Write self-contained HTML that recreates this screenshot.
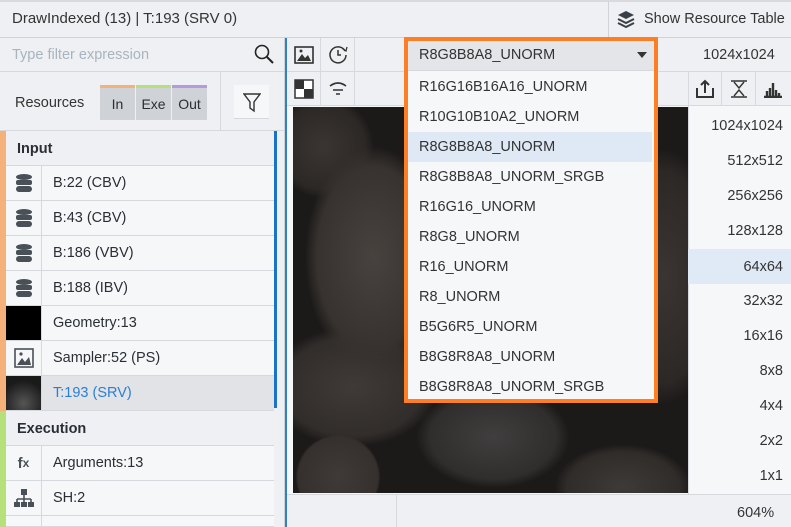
<!DOCTYPE html>
<html style="overflow:hidden;width:791px;height:527px"><head><style>
*{box-sizing:border-box;margin:0;padding:0}
body{width:791px;height:527px;overflow:hidden;background:#eef0f3;font-family:"Liberation Sans",sans-serif;font-size:14px;color:#2a2f36;position:relative}
.a{position:absolute}
.row{position:absolute;left:6px;width:268px;height:35px;border-bottom:1px solid #d5d8dc;background:#f6f7f9}
.row .ic{position:absolute;left:0;top:0;width:36px;height:34px;border-right:1px solid #d5d8dc;display:flex;align-items:center;justify-content:center}
.row .t{position:absolute;left:47px;top:9px;font-size:14.5px}
.hdr{position:absolute;left:6px;width:268px;height:35px;border-bottom:1px solid #d5d8dc;background:#eef0f3;font-weight:bold;padding:10px 0 0 11px;font-size:14.5px}
.mip{position:absolute;left:688px;width:103px;height:35px;text-align:right;padding:10px 8px 0 0;color:#333;font-size:14.5px}
.dd{position:absolute;left:408px;width:244px;height:30px;padding:7px 0 0 11px;color:#333;font-size:14.5px}
.tb{position:absolute;width:34px;height:34px;border-right:1px solid #d5d8dc;border-bottom:1px solid #d5d8dc;display:flex;align-items:center;justify-content:center}
</style></head><body>
<div class="a" style="left:0;top:0;width:791px;height:38px;border-bottom:1px solid #cfd2d6;border-top:2px solid #d8dadd"></div>
<div class="a" style="left:12px;top:10px;font-size:15px;color:#333">DrawIndexed (13) | T:193 (SRV 0)</div>
<div class="a" style="left:608px;top:2px;width:183px;height:36px;border-left:1px solid #cfd2d6"></div>
<svg class="a" style="left:616px;top:10px" width="20" height="18" viewBox="0 0 20 18"><path d="M10 1 L18 5 L10 9 L2 5Z" fill="#3a4048"/><path d="M2 9 L10 13 L18 9" stroke="#3a4048" stroke-width="2" fill="none"/><path d="M2 13 L10 17 L18 13" stroke="#3a4048" stroke-width="2" fill="none"/></svg>
<div class="a" style="left:644px;top:11px;color:#333;font-size:14.5px">Show Resource Table</div>

<div class="a" style="left:0;top:38px;width:285px;height:489px;background:#eef0f3;border-right:1px solid #cfd2d6;overflow:hidden">
</div>
<div class="a" style="left:0;top:38px;width:284px;height:34px;border-bottom:1px solid #d5d8dc"></div>
<div class="a" style="left:12px;top:47px;color:#a9b4c0;font-size:14.5px">Type filter expression</div>
<svg class="a" style="left:254px;top:44px" width="20" height="20"><circle cx="8" cy="8" r="6.5" stroke="#222" stroke-width="1.6" fill="none"/><path d="M13 13 L19 19" stroke="#222" stroke-width="2"/></svg>
<div class="a" style="left:0;top:72px;width:284px;height:59px;border-bottom:1px solid #d5d8dc"></div>
<div class="a" style="left:15px;top:95px;color:#333;font-size:14.5px">Resources</div>
<div class="a" style="left:100px;top:85px;width:35px;height:35px;background:#cfd2d6;border-top:3px solid #f4b27a;text-align:center;padding-top:8px">In</div>
<div class="a" style="left:136px;top:85px;width:35px;height:35px;background:#cfd2d6;border-top:3px solid #b5e07a;text-align:center;padding-top:8px">Exe</div>
<div class="a" style="left:172px;top:85px;width:35px;height:35px;background:#cfd2d6;border-top:3px solid #b49be0;text-align:center;padding-top:8px">Out</div>
<div class="a" style="left:220px;top:72px;width:1px;height:59px;background:#d5d8dc"></div>
<div class="a" style="left:234px;top:85px;width:35px;height:34px;background:#f6f7f9;border-bottom:1px solid #d5d8dc"></div>
<svg class="a" style="left:243px;top:93px" width="18" height="20"><path d="M1 1 H17 L11 9 V18 L7 15 V9Z" stroke="#333" stroke-width="1.4" fill="none"/></svg>

<div class="a" style="left:0;top:131px;width:6px;height:280px;background:#f4b27a"></div>
<div class="a" style="left:0;top:411px;width:6px;height:116px;background:#b5e07a"></div>
<div class="hdr" style="top:131px">Input</div>
<div class="row" style="top:166px"><div class="ic"><svg width="18" height="20"><ellipse cx="9" cy="4" rx="8" ry="3" fill="#4a5058"/><rect x="1" y="7" width="16" height="5" rx="2" fill="#4a5058"/><rect x="1" y="13" width="16" height="6" rx="3" fill="#4a5058"/></svg></div><div class="t">B:22 (CBV)</div></div>
<div class="row" style="top:201px"><div class="ic"><svg width="18" height="20"><ellipse cx="9" cy="4" rx="8" ry="3" fill="#4a5058"/><rect x="1" y="7" width="16" height="5" rx="2" fill="#4a5058"/><rect x="1" y="13" width="16" height="6" rx="3" fill="#4a5058"/></svg></div><div class="t">B:43 (CBV)</div></div>
<div class="row" style="top:236px"><div class="ic"><svg width="18" height="20"><ellipse cx="9" cy="4" rx="8" ry="3" fill="#4a5058"/><rect x="1" y="7" width="16" height="5" rx="2" fill="#4a5058"/><rect x="1" y="13" width="16" height="6" rx="3" fill="#4a5058"/></svg></div><div class="t">B:186 (VBV)</div></div>
<div class="row" style="top:271px"><div class="ic"><svg width="18" height="20"><ellipse cx="9" cy="4" rx="8" ry="3" fill="#4a5058"/><rect x="1" y="7" width="16" height="5" rx="2" fill="#4a5058"/><rect x="1" y="13" width="16" height="6" rx="3" fill="#4a5058"/></svg></div><div class="t">B:188 (IBV)</div></div>
<div class="row" style="top:306px"><div class="ic" style="background:#000"></div><div class="t">Geometry:13</div></div>
<div class="row" style="top:341px"><div class="ic"><svg width="20" height="20"><rect x="1" y="1" width="18" height="18" stroke="#4a5058" stroke-width="1.6" fill="none"/><path d="M3 17 L8 10 L11 14 L15 9 L17 17Z" fill="#4a5058"/><circle cx="7" cy="6" r="1.6" fill="#4a5058"/></svg></div><div class="t">Sampler:52 (PS)</div></div>
<div class="row" style="top:376px;background:#e1e3e7"><div class="ic" style="background:radial-gradient(circle at 50% 80%,#555 0,#333 40%,#1a1a1a 70%)"></div><div class="t" style="color:#2a7fd4">T:193 (SRV)</div></div>
<div class="hdr" style="top:411px">Execution</div>
<div class="row" style="top:446px"><div class="ic" style="font-weight:bold;color:#4a5058;font-size:15px">f<span style="font-size:12px">x</span></div><div class="t">Arguments:13</div></div>
<div class="row" style="top:481px"><div class="ic"><svg width="20" height="20"><rect x="7" y="1" width="6" height="6" fill="#4a5058"/><path d="M10 7 V11 M3 11 H17 M3 11 V14 M17 11 V14 M10 11 V14" stroke="#4a5058" stroke-width="1.6"/><rect x="0" y="14" width="6" height="5" fill="#4a5058"/><rect x="7" y="14" width="6" height="5" fill="#4a5058"/><rect x="14" y="14" width="6" height="5" fill="#4a5058"/></svg></div><div class="t">SH:2</div></div>
<div class="row" style="top:516px;height:11px"><div class="ic" style="height:11px"></div></div>
<div class="a" style="left:274px;top:131px;width:3px;height:277px;background:#1a73c8"></div>

<div class="a" style="left:285px;top:38px;width:2px;height:489px;background:#2f7fcb"></div>
<div class="a" style="left:287px;top:38px;width:504px;height:456px;background:#f6f7f9"></div>
<div class="a" style="left:287px;top:38px;width:504px;height:34px;background:#eef0f3;border-bottom:1px solid #d5d8dc"></div>
<div class="a" style="left:287px;top:72px;width:504px;height:34px;background:#eef0f3;border-bottom:1px solid #d5d8dc"></div>
<div class="tb" style="left:287px;top:38px"><svg width="20" height="18"><rect x="1" y="1" width="18" height="16" stroke="#333" stroke-width="1.6" fill="none"/><path d="M3 15 L8 8 L11 12 L14 9 L17 15Z" fill="#333"/><circle cx="7" cy="5" r="1.5" fill="#333"/></svg></div>
<div class="tb" style="left:321px;top:38px"><svg width="20" height="20"><path d="M17 6 A8 8 0 1 0 18 10" stroke="#333" stroke-width="1.5" fill="none"/><path d="M10 5 V10 H13" stroke="#333" stroke-width="1.5" fill="none"/><path d="M15 4 L18 6 L19 2" stroke="#333" stroke-width="1.3" fill="none"/></svg></div>
<div class="tb" style="left:287px;top:72px"><svg width="20" height="20"><rect x="1" y="1" width="18" height="18" stroke="#333" stroke-width="1.5" fill="#fff"/><rect x="1" y="1" width="9" height="9" fill="#333"/><rect x="10" y="10" width="9" height="9" fill="#333"/></svg></div>
<div class="tb" style="left:321px;top:72px"><svg width="20" height="16"><path d="M2 5 Q10 -1 18 5 M5 9 H15 M8 13 H12" stroke="#333" stroke-width="1.6" fill="none"/></svg></div>
<div class="a" style="left:703px;top:47px;color:#333;font-size:14.5px">1024x1024</div>
<div class="tb" style="left:688px;top:72px;border-left:1px solid #d5d8dc"><svg width="20" height="20"><path d="M2 9 V18 H18 V9 M10 14 V2 M6 6 L10 2 L14 6" stroke="#333" stroke-width="2" fill="none"/></svg></div>
<div class="tb" style="left:722px;top:72px"><svg width="20" height="20"><path d="M2 2 H18 M2 18 H18" stroke="#333" stroke-width="1.6"/><path d="M5 3 L10 9 L15 3 M5 17 L10 11 L15 17" stroke="#333" stroke-width="1.4" fill="none"/></svg></div>
<div class="tb" style="left:756px;top:72px;border-right:none"><svg width="20" height="18"><path d="M1 17 H19 M4 17 V11 M7 17 V8 M10 17 V3 M13 17 V10 M16 17 V13" stroke="#333" stroke-width="2.4"/></svg></div>
<div class="a" style="left:688px;top:106px;width:1px;height:388px;background:#d5d8dc"></div>
<div class="a" style="left:293px;top:107px;width:395px;height:386px;background:
radial-gradient(ellipse 50px 50px at 45px 370px,#3f3a37 0,#35302d 80%,transparent 85%),
radial-gradient(ellipse 90px 60px at 200px 330px,#403e3e 0,#302d2d 70%,transparent 85%),
radial-gradient(ellipse 80px 50px at 330px 380px,#3e3a38 0,#302c2a 70%,transparent 85%),
radial-gradient(ellipse 80px 130px at 80px 150px,#48423f 0,#37322f 70%,transparent 85%),
radial-gradient(ellipse 70px 150px at 370px 170px,#3a3532 0,#2c2826 70%,transparent 85%),
radial-gradient(ellipse 100px 70px at 60px 280px,#3f3a37 0,#312d2b 70%,transparent 85%),
radial-gradient(ellipse 60px 60px at 30px 40px,#3a3532 0,#2c2826 70%,transparent 85%),
#1c1a19"></div>
<div class="mip" style="top:108px">1024x1024</div>
<div class="mip" style="top:143px">512x512</div>
<div class="mip" style="top:178px">256x256</div>
<div class="mip" style="top:213px">128x128</div>
<div class="mip" style="top:249px;background:#e0eaf6">64x64</div>
<div class="mip" style="top:283px">32x32</div>
<div class="mip" style="top:318px">16x16</div>
<div class="mip" style="top:353px">8x8</div>
<div class="mip" style="top:388px">4x4</div>
<div class="mip" style="top:423px">2x2</div>
<div class="mip" style="top:458px">1x1</div>
<div class="a" style="left:287px;top:494px;width:504px;height:33px;background:#eef0f3;border-top:1px solid #d5d8dc"></div>
<div class="a" style="left:396px;top:494px;width:1px;height:33px;background:#d5d8dc"></div>
<div class="a" style="left:737px;top:505px;color:#333;font-size:14.5px">604%</div>

<div class="a" style="left:404px;top:37px;width:254px;height:366px;border:4px solid #fd7e24;background:#f6f7f9"></div>
<div class="a" style="left:408px;top:41px;width:246px;height:30px;background:#e3e5e9;border-bottom:1px solid #d5d8dc"></div>
<div class="a" style="left:419px;top:47px;color:#333;font-size:14.5px">R8G8B8A8_UNORM</div>
<svg class="a" style="left:637px;top:52px" width="10" height="6"><path d="M0 0 H10 L5 6Z" fill="#333"/></svg>
<div class="dd" style="top:72px">R16G16B16A16_UNORM</div>
<div class="dd" style="top:102px">R10G10B10A2_UNORM</div>
<div class="dd" style="top:132px;background:#dfe9f6">R8G8B8A8_UNORM</div>
<div class="dd" style="top:162px">R8G8B8A8_UNORM_SRGB</div>
<div class="dd" style="top:192px">R16G16_UNORM</div>
<div class="dd" style="top:222px">R8G8_UNORM</div>
<div class="dd" style="top:252px">R16_UNORM</div>
<div class="dd" style="top:282px">R8_UNORM</div>
<div class="dd" style="top:312px">B5G6R5_UNORM</div>
<div class="dd" style="top:342px">B8G8R8A8_UNORM</div>
<div class="dd" style="top:372px">B8G8R8A8_UNORM_SRGB</div>
</body></html>
